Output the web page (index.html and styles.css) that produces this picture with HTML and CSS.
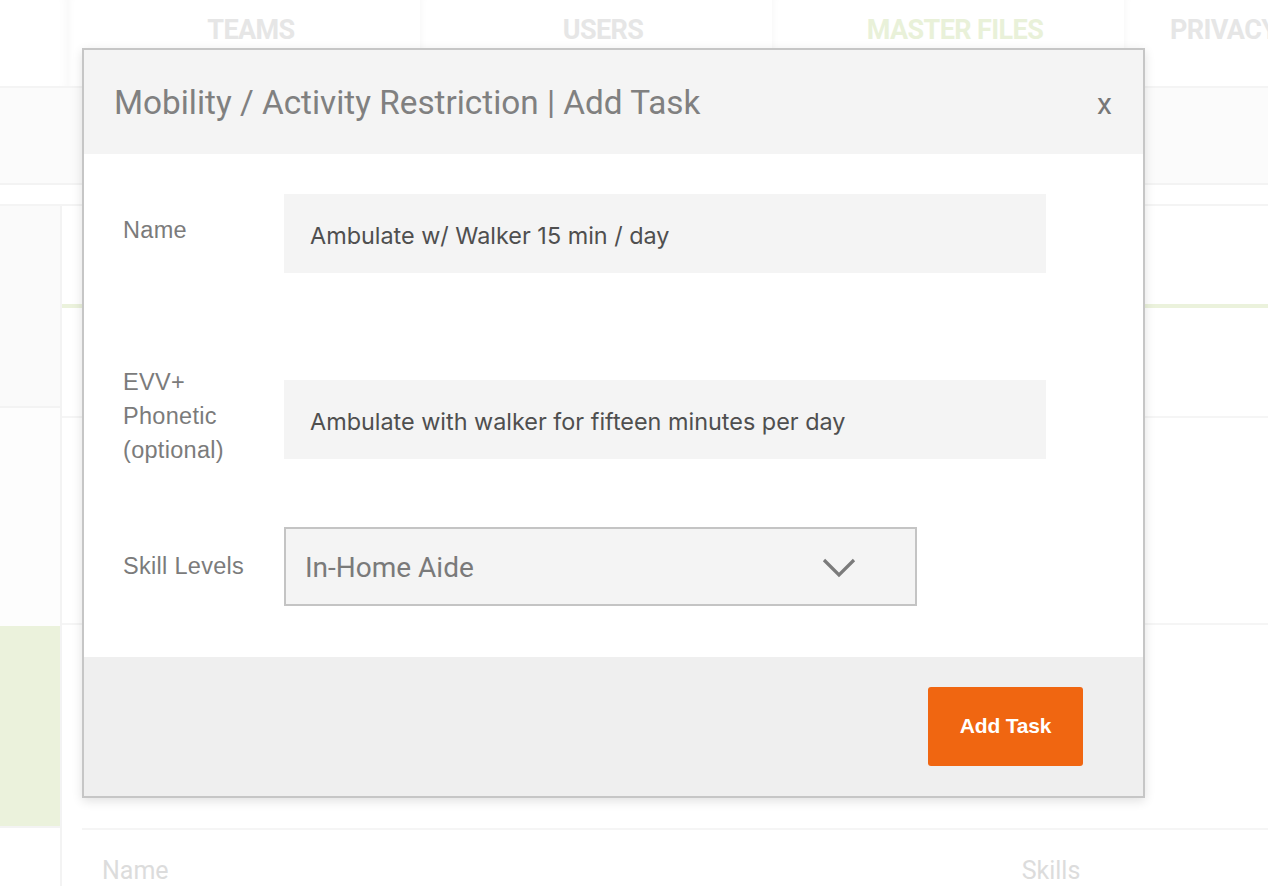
FILE: index.html
```html
<!DOCTYPE html>
<html lang="en">
<head>
<meta charset="utf-8">
<title>Add Task</title>
<link rel="stylesheet" href="styles.css">
</head>
<body>
<div class="page">
  <header class="nav">
    <div class="nav-logo"></div>
    <div class="tab">TEAMS</div>
    <div class="tab">USERS</div>
    <div class="tab tab-active">MASTER FILES</div>
    <div class="tab tab-last">PRIVACY</div>
  </header>
  <div class="subbar"></div>
  <div class="spacer-row"></div>
  <div class="main">
    <aside class="sidebar">
      <div class="side-item side-a"></div>
      <div class="side-item side-b"></div>
      <div class="side-item side-c"></div>
    </aside>
    <section class="content">
      <div class="block block-top"></div>
      <div class="green-bar"></div>
      <div class="block block-1"></div>
      <div class="block block-2"></div>
      <div class="block block-3"></div>
      <div class="table-head">
        <span class="th">Name</span>
        <span class="th th-skills">Skills</span>
      </div>
    </section>
  </div>
</div>

<div class="modal">
  <div class="modal-header">
    <h2 class="modal-title">Mobility / Activity Restriction | Add Task</h2>
    <span class="modal-close">x</span>
  </div>
  <div class="modal-body">
    <div class="form-row row-name">
      <label class="form-label">Name</label>
      <div class="text-field">Ambulate w/ Walker 15 min / day</div>
    </div>
    <div class="form-row row-evv">
      <label class="form-label">EVV+<br>Phonetic<br>(optional)</label>
      <div class="text-field">Ambulate with walker for fifteen minutes per day</div>
    </div>
    <div class="form-row row-skill">
      <label class="form-label">Skill Levels</label>
      <div class="select-field">
        <span class="select-value">In-Home Aide</span>
        <svg class="chevron" width="34" height="20" viewBox="0 0 34 20"><path d="M2 2 L17 17 L32 2" fill="none" stroke="#7b7b7b" stroke-width="3.2"/></svg>
      </div>
    </div>
  </div>
  <div class="modal-footer">
    <button class="btn-add">Add Task</button>
  </div>
</div>
</body>
</html>
```

FILE: styles.css
```css
html, body {
  margin: 0;
  padding: 0;
  background: #ffffff;
  font-family: Roboto, "Liberation Sans", sans-serif;
}

.page {
  width: 1268px;
  height: 886px;
  overflow: hidden;
}

/* ---------- background nav ---------- */
.nav {
  display: flex;
  height: 86px;
  border-bottom: 2px solid #f4f4f4;
  background: #ffffff;
  overflow: hidden;
}
.nav-logo {
  width: 68px;
  flex: none;
  box-shadow: inset -10px 0 14px -12px rgba(0,0,0,0.06);
}
.tab {
  width: 352px;
  flex: none;
  box-sizing: border-box;
  padding: 14px 0 0 14px;
  text-align: center;
  font-family: Roboto, sans-serif;
  font-weight: 700;
  font-size: 27px;
  letter-spacing: -0.6px;
  color: #e6e6e6;
  box-shadow: inset 10px 0 12px -12px rgba(0,0,0,0.06);
  white-space: nowrap;
}
.tab-active {
  color: #e9f1d9;
}
.tab-last {
  text-align: left;
  padding-left: 46px;
}

.subbar {
  height: 95px;
  background: #fbfbfb;
  border-bottom: 2px solid #f3f3f3;
}
.spacer-row {
  height: 19px;
  border-bottom: 2px solid #f4f4f4;
}

.main {
  display: flex;
  height: 680px;
}
.sidebar {
  width: 60px;
  flex: none;
  border-right: 2px solid #f3f3f3;
}
.side-item {
  box-sizing: border-box;
}
.side-a {
  height: 202px;
  background: #fafafa;
  border-bottom: 2px solid #f3f3f3;
}
.side-b {
  height: 218px;
  background: #fdfdfd;
}
.side-c {
  height: 202px;
  background: #ebf2dc;
  border-bottom: 2px solid #f3f3f3;
}

.content {
  flex: 1;
  display: flex;
  flex-direction: column;
}
.block-top {
  height: 98px;
}
.green-bar {
  height: 4px;
  background: #ebf2dc;
}
.block {
  box-sizing: border-box;
}
.block-1 {
  height: 110px;
  border-bottom: 2px solid #f5f5f5;
}
.block-2 {
  height: 207px;
  border-bottom: 2px solid #f5f5f5;
}
.block-3 {
  height: 205px;
  margin-left: 20px;
  border-bottom: 2px solid #f5f5f5;
}
.table-head {
  display: flex;
  padding: 26px 0 0 40px;
  font-size: 25px;
  color: #dcdcdc;
}
.th-skills {
  margin-left: 853px;
}

/* ---------- modal ---------- */
.modal {
  position: absolute;
  left: 82px;
  top: 48px;
  width: 1059px;
  border: 2px solid #c6c6c6;
  background: #ffffff;
  box-shadow: 0 3px 10px rgba(0,0,0,0.12);
}
.modal-header {
  display: flex;
  align-items: center;
  justify-content: space-between;
  height: 104px;
  padding: 0 31px 0 30px;
  background: #f4f4f4;
}
.modal-title {
  margin: 0;
  font-family: Roboto, sans-serif;
  font-weight: 400;
  font-size: 33.3px;
  color: #808080;
}
.modal-close {
  font-family: Roboto, sans-serif;
  font-size: 30px;
  color: #777777;
  margin-top: 2px;
}

.modal-body {
  padding: 40px 0 51px 39px;
  display: flex;
  flex-direction: column;
}
.form-row {
  display: flex;
  align-items: center;
}
.row-name {
  margin-bottom: 99px;
}
.row-evv {
  margin-bottom: 59.5px;
}
.form-label {
  width: 161px;
  flex: none;
  font-family: "Liberation Sans", Arial, sans-serif;
  font-size: 23.5px;
  line-height: 34px;
  letter-spacing: 0.3px;
  color: #7b7b7b;
  margin-top: -7px;
}
.row-skill .form-label {
  margin-top: 0;
}
.text-field {
  width: 762px;
  height: 79px;
  box-sizing: border-box;
  padding: 4px 26px 0;
  display: flex;
  align-items: center;
  background: #f4f4f4;
  font-family: Inter, "Open Sans", sans-serif;
  font-size: 23.4px;
  color: #4f4f4f;
  white-space: nowrap;
}
.select-field {
  width: 633px;
  height: 79px;
  box-sizing: border-box;
  border: 2px solid #c4c4c4;
  background: #f4f4f4;
  display: flex;
  align-items: center;
  justify-content: space-between;
  padding: 0 59px 0 19px;
}
.select-value {
  font-family: Roboto, sans-serif;
  font-size: 28px;
  color: #7a7a7a;
  margin-top: 3px;
}
.chevron {
  display: block;
  margin-top: 3px;
}

.modal-footer {
  height: 139px;
  box-sizing: border-box;
  background: #efefef;
  display: flex;
  justify-content: flex-end;
  align-items: flex-start;
  padding: 30px 60px 0 0;
}
.btn-add {
  width: 155px;
  height: 79px;
  border: none;
  border-radius: 3px;
  background: #f06611;
  color: #ffffff;
  font-family: "Liberation Sans", Arial, sans-serif;
  font-weight: 700;
  font-size: 21px;
  letter-spacing: -0.2px;
  padding: 0;
}
```
